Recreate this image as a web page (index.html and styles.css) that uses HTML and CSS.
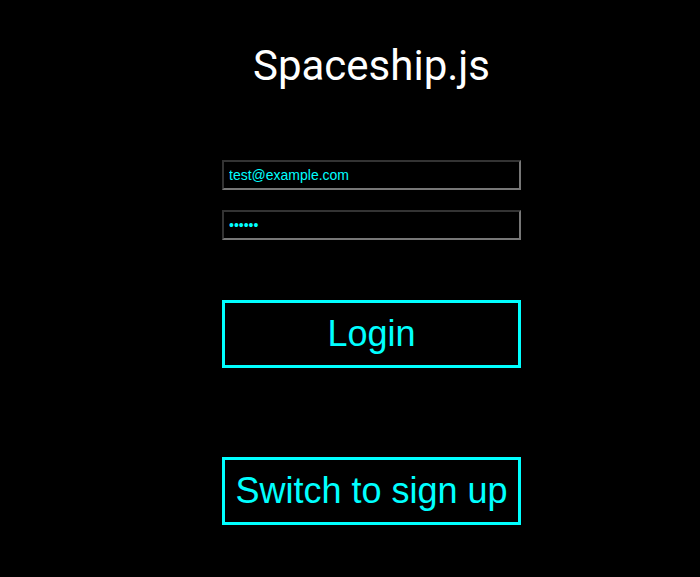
FILE: index.html
```html
<!DOCTYPE html>
<html>
<head>
<meta charset="utf-8">
<link rel="stylesheet" href="styles.css">
</head>
<body>
<div class="page">
  <h1 class="title">Spaceship.js</h1>
  <form class="form">
    <input class="field" type="text" value="test@example.com">
    <input class="field" type="password" value="secret">
    <button class="btn btn-login" type="button">Login</button>
    <button class="btn btn-switch" type="button">Switch to sign up</button>
  </form>
</div>
</body>
</html>
```
FILE: styles.css
```css
html, body {
  margin: 0;
  padding: 0;
  background: #000;
}
.page {
  width: 299px;
  margin-left: 222px;
  display: flex;
  flex-direction: column;
  align-items: center;
}
.title {
  margin: 42px 0 0 0;
  font-family: Roboto, sans-serif;
  font-weight: 400;
  font-size: 42px;
  line-height: 48px;
  color: #fff;
  white-space: nowrap;
}
.form {
  width: 299px;
  margin-top: 70px;
  display: flex;
  flex-direction: column;
}
.field {
  box-sizing: border-box;
  width: 299px;
  height: 30px;
  margin: 0 0 20px 0;
  padding: 0 5px;
  background: #000;
  color: #00ffff;
  font-family: "Liberation Sans", Arial, sans-serif;
  font-size: 14px;
  border: 2px solid #777777;
  border-top-color: #333333;
  border-left-color: #333333;
  outline: none;
}
.btn {
  box-sizing: border-box;
  width: 299px;
  height: 68px;
  padding: 0;
  background: #000;
  color: #00ffff;
  border: 3px solid #00ffff;
  font-family: "Liberation Sans", Arial, sans-serif;
  font-size: 36px;
  white-space: nowrap;
}
.btn-login {
  margin-top: 40px;
}
.btn-switch {
  margin-top: 89px;
}
```
